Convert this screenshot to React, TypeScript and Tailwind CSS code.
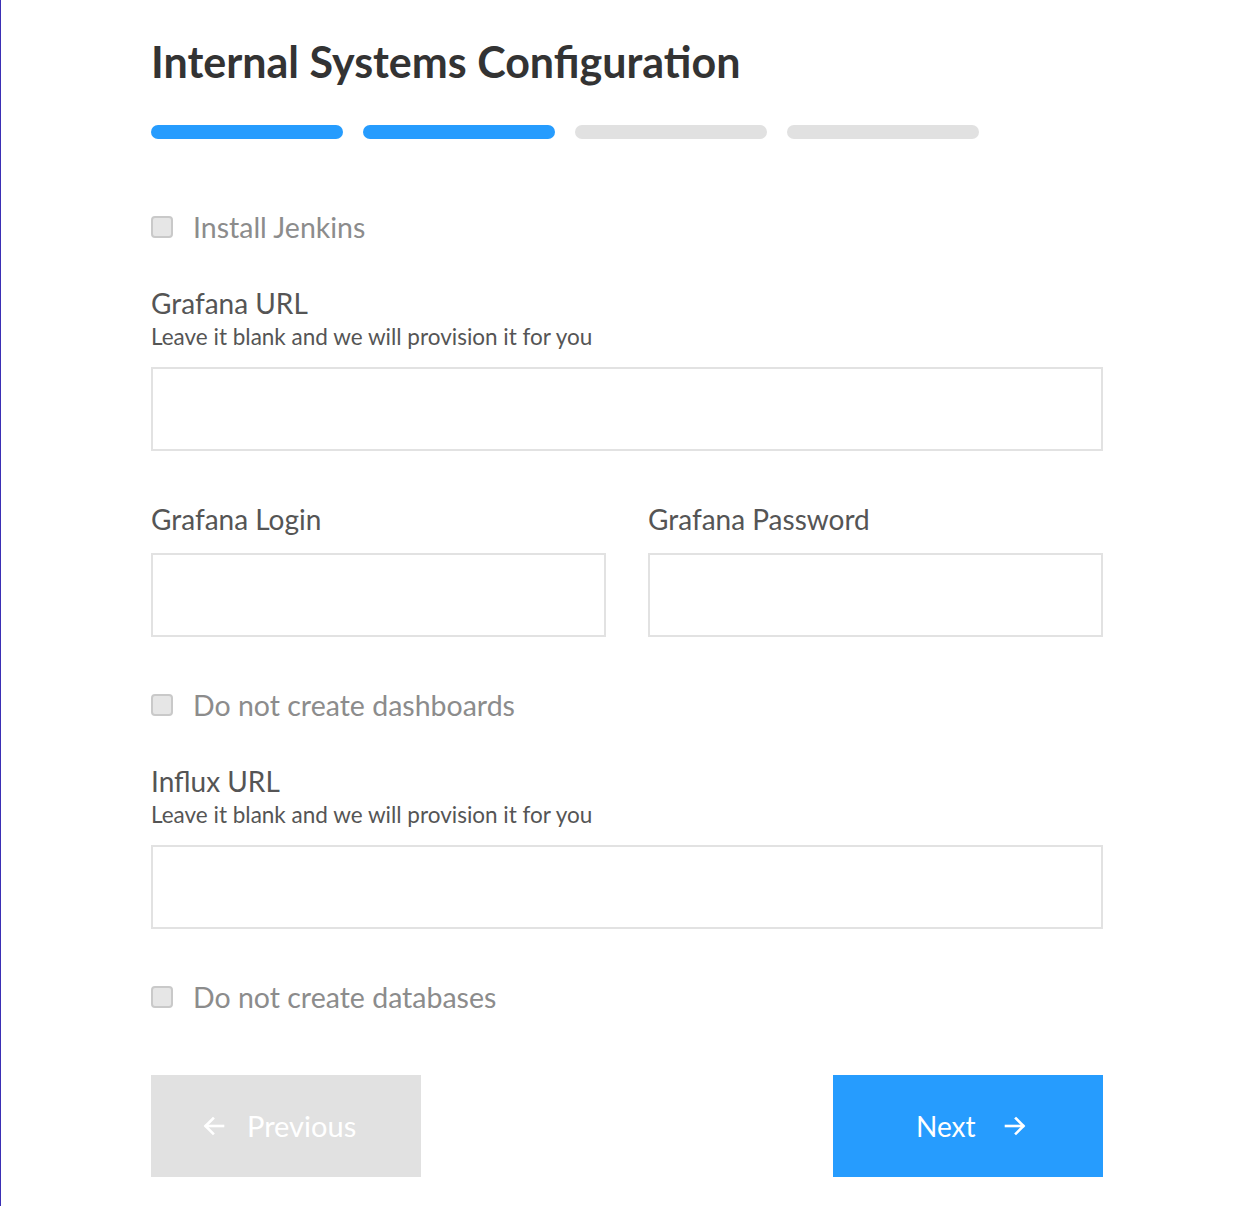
import React from "react";

const font = { fontFamily: "Lato, 'Noto Sans', sans-serif" };

function Checkbox({ label }: { label: string }) {
  return (
    <label className="flex items-center h-[30px] gap-[20px] cursor-pointer">
      <span className="block w-[22px] h-[22px] rounded-[4px] border-2 border-[#c9c9c9] bg-[#e6e6e6] box-border" />
      <span className="text-[28.5px] leading-[30px] text-[#8c8c8c]">{label}</span>
    </label>
  );
}

function ArrowLeft() {
  return (
    <svg width="22" height="22" viewBox="0 0 22 22" fill="none" stroke="currentColor" strokeWidth="2.6" strokeLinecap="square">
      <path d="M20 11H3" />
      <path d="M10 3.5L2.5 11L10 18.5" />
    </svg>
  );
}

function ArrowRight() {
  return (
    <svg width="22" height="22" viewBox="0 0 22 22" fill="none" stroke="currentColor" strokeWidth="2.6" strokeLinecap="square">
      <path d="M2 11H19" />
      <path d="M12 3.5L19.5 11L12 18.5" />
    </svg>
  );
}

export default function App() {
  return (
    <div className="min-h-[1206px] w-full bg-white border-l border-[#3b2fb5]" style={font}>
      <div className="w-[952px] ml-[150px] pt-[34px]">
        <h1 className="text-[43px] leading-[56px] font-bold text-[#333333]">Internal Systems Configuration</h1>

        <div className="mt-[35px] flex gap-[20px]">
          <div className="w-[192px] h-[14px] rounded-full bg-[#269cfe]" />
          <div className="w-[192px] h-[14px] rounded-full bg-[#269cfe]" />
          <div className="w-[192px] h-[14px] rounded-full bg-[#e1e1e1]" />
          <div className="w-[192px] h-[14px] rounded-full bg-[#e1e1e1]" />
        </div>

        <div className="mt-[73px]">
          <Checkbox label="Install Jenkins" />
        </div>

        <div className="mt-[44px] text-[28px] leading-[34px] text-[#555555]">Grafana URL</div>
        <div className="mt-[3px] text-[22.5px] leading-[28px] text-[#555555]">Leave it blank and we will provision it for you</div>
        <input className="mt-[16px] block w-full h-[84px] border-2 border-[#e2e2e2] outline-none px-4 text-[22px]" />

        <div className="mt-[51px] grid grid-cols-2 gap-x-[42px]">
          <div>
            <div className="text-[28px] leading-[34px] text-[#555555]">Grafana Login</div>
            <input className="mt-[17px] block w-full h-[84px] border-2 border-[#e2e2e2] outline-none px-4 text-[22px]" />
          </div>
          <div>
            <div className="text-[28px] leading-[34px] text-[#555555]">Grafana Password</div>
            <input type="password" className="mt-[17px] block w-full h-[84px] border-2 border-[#e2e2e2] outline-none px-4 text-[22px]" />
          </div>
        </div>

        <div className="mt-[53px]">
          <Checkbox label="Do not create dashboards" />
        </div>

        <div className="mt-[44px] text-[28px] leading-[34px] text-[#555555]">Influx URL</div>
        <div className="mt-[3px] text-[22.5px] leading-[28px] text-[#555555]">Leave it blank and we will provision it for you</div>
        <input className="mt-[16px] block w-full h-[84px] border-2 border-[#e2e2e2] outline-none px-4 text-[22px]" />

        <div className="mt-[53px]">
          <Checkbox label="Do not create databases" />
        </div>

        <div className="mt-[63px] flex justify-between">
          <button className="w-[270px] h-[102px] bg-[#e1e1e1] text-white flex items-center justify-start pl-[52px] gap-[22px] text-[29px]">
            <ArrowLeft />
            <span>Previous</span>
          </button>
          <button className="w-[270px] h-[102px] bg-[#269cfe] text-white flex items-center justify-start pl-[83px] gap-[28px] text-[28px]">
            <span>Next</span>
            <ArrowRight />
          </button>
        </div>
      </div>
    </div>
  );
}
